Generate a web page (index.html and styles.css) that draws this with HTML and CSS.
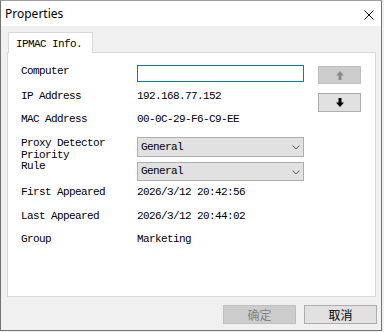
FILE: index.html
```html
<!DOCTYPE html>
<html>
	<head>
		<link rel="stylesheet" href="styles.css">
	</head>
	<body>
		<div class="window">
			<div class="titlebar">
				<span class="title">Properties</span>
				<svg class="close" width="10" height="10" viewBox="0 0 10 10">
					<path d="M0.5 0.5 L9.5 9.5 M9.5 0.5 L0.5 9.5" stroke="#111" stroke-width="1" fill="none"/>
				</svg>
			</div>

			<div class="content">
				<div class="tabs">
					<div class="tab">IPMAC Info.</div>
				</div>
				<div class="panel">
					<div class="row row-1">
						<div class="label">Computer</div>
						<div class="value"><div class="textbox"></div></div>
						<div class="side"><button class="arrow-btn up" disabled>
							<svg width="8" height="9" viewBox="0 0 8 9"><path d="M4 0 L8 4.5 L5.5 4.5 L5.5 9 L2.5 9 L2.5 4.5 L0 4.5 Z" fill="#8a8a8a"/></svg>
						</button></div>
					</div>
					<div class="row row-2">
						<div class="label">IP Address</div>
						<div class="value">192.168.77.152</div>
						<div class="side"><button class="arrow-btn down">
							<svg width="8" height="9" viewBox="0 0 8 9"><path d="M4 9 L8 4.5 L5.5 4.5 L5.5 0 L2.5 0 L2.5 4.5 L0 4.5 Z" fill="#000"/></svg>
						</button></div>
					</div>
					<div class="row row-3">
						<div class="label">MAC Address</div>
						<div class="value">00-0C-29-F6-C9-EE</div>
					</div>
					<div class="row row-4">
						<div class="label multi">Proxy Detector<br>Priority<br>Rule</div>
						<div class="value selects">
							<div class="select">General
								<svg class="chev" width="8" height="5" viewBox="0 0 8 5"><path d="M0.5 0.5 L4 4 L7.5 0.5" stroke="#555" fill="none"/></svg>
							</div>
							<div class="select second">General
								<svg class="chev" width="8" height="5" viewBox="0 0 8 5"><path d="M0.5 0.5 L4 4 L7.5 0.5" stroke="#555" fill="none"/></svg>
							</div>
						</div>
					</div>
					<div class="row row-6">
						<div class="label">First Appeared</div>
						<div class="value">2026/3/12 20:42:56</div>
					</div>
					<div class="row row-7">
						<div class="label">Last Appeared</div>
						<div class="value">2026/3/12 20:44:02</div>
					</div>
					<div class="row">
						<div class="label">Group</div>
						<div class="value">Marketing</div>
					</div>
				</div>

				<div class="footer">
					<button class="btn" disabled>确定</button>
					<button class="btn">取消</button>
				</div>
			</div>
		</div>
	</body>
</html>
```

FILE: styles.css
```css
html {
  box-sizing: border-box;
}

*, *:before, *:after {
  box-sizing: inherit;
}

body {
  margin: 0;
  padding: 0;
  background: #f0f0f0;
  font-family: "Liberation Mono", monospace;
}

.window {
  width: 382px;
  height: 331px;
  border: 1px solid #727272;
  border-top-color: #a0a0a0;
  background: #f0f0f0;
  display: flex;
  flex-direction: column;
}

.titlebar {
  height: 25px;
  background: #ffffff;
  display: flex;
  align-items: center;
  justify-content: space-between;
  padding: 0 7px 0 4px;
}

.title {
  font-family: "Noto Sans", sans-serif;
  font-size: 12px;
  color: #000;
  line-height: 14px;
}

.close {
  display: block;
  margin-top: 2px;
}

.content {
  padding: 6px 4px 0 6px;
}

.tabs {
  display: flex;
  padding-left: 1px;
}

.tab {
  position: relative;
  height: 21px;
  margin-bottom: -1px;
  padding: 4px 10px 0 7px;
  white-space: nowrap;
  background: #ffffff;
  border: 1px solid #d9d9d9;
  border-bottom: none;
  font-size: 11px;
  letter-spacing: -0.6px;
  line-height: 14px;
  color: #000;
}

.panel {
  height: 245px;
  margin-right: 1px;
  background: #ffffff;
  border: 1px solid #d9d9d9;
  padding: 11px 0 0 13px;
}

.row {
  display: flex;
  align-items: flex-start;
  height: 23px;
  font-size: 11px;
  letter-spacing: -0.6px;
  line-height: 14px;
  color: #000;
}

.row-1 { height: 25px; }
.row-4 { height: 50px; }
.row-6 { height: 24px; }

.label {
  width: 116px;
}

.label.multi {
  line-height: 11.5px;
  margin-top: 3px;
}

.value {
  width: 167px;
}

.side {
  margin-left: 14px;
  width: 43px;
}

.textbox {
  width: 167px;
  height: 17px;
  margin-top: 1px;
  border: 1px solid #0078d7;
  background: #fff;
}

.arrow-btn {
  display: flex;
  align-items: center;
  justify-content: center;
  width: 43px;
  padding: 0;
  border: 1px solid #adadad;
  background: #e1e1e1;
}

.arrow-btn.up {
  height: 18px;
  margin-top: 2px;
  background: #cccccc;
  border-color: #bfbfbf;
}

.arrow-btn.down {
  height: 19px;
  margin-top: 4px;
}

.arrow-btn svg {
  display: block;
}

.selects {
  margin-top: 2px;
}

.select {
  position: relative;
  height: 20px;
  background: #e1e1e1;
  border: 1px solid #adadad;
  padding: 2px 0 0 3px;
}

.select.second {
  height: 19px;
  margin-top: 5px;
  padding-top: 1px;
}

.chev {
  position: absolute;
  right: 3px;
  top: 7px;
}

.footer {
  display: flex;
  justify-content: flex-end;
  gap: 8px;
  margin-top: 8px;
}

.btn {
  width: 73px;
  height: 19px;
  padding: 0;
  border: 1px solid #adadad;
  background: #e1e1e1;
  font-family: "Noto Sans CJK SC", sans-serif;
  font-size: 12px;
  line-height: 15px;
  color: #000;
}

.btn:disabled {
  background: #cccccc;
  border-color: #bfbfbf;
  color: #838383;
}
```
